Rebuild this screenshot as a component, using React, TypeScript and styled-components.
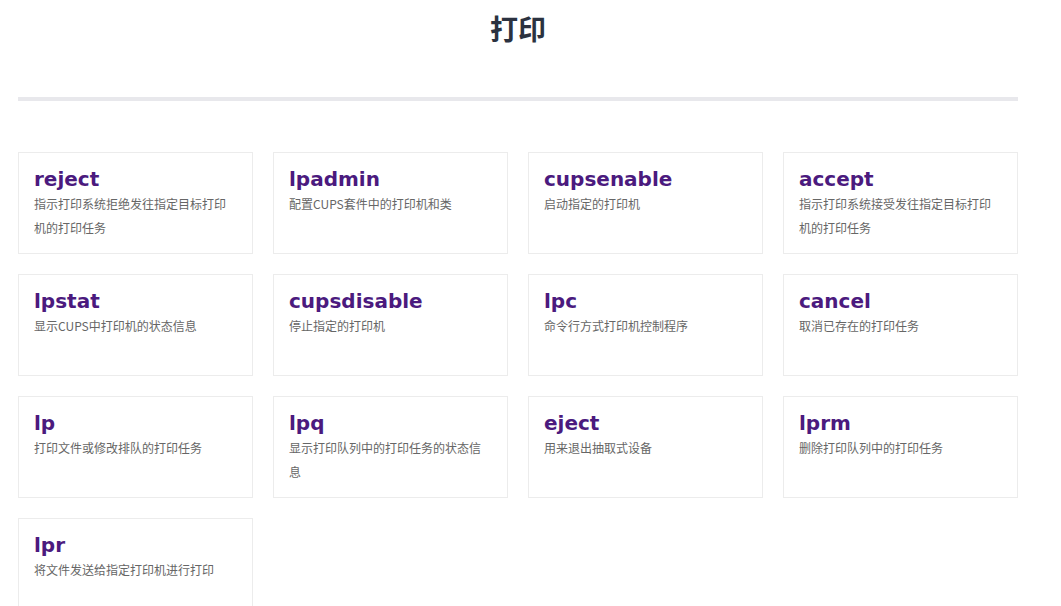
import React from "react";
import styled, { createGlobalStyle } from "styled-components";

const GlobalStyle = createGlobalStyle`
  html, body {
    margin: 0;
    padding: 0;
    background: #fff;
  }
  body {
    font-family: "Noto Sans CJK SC", "Noto Sans", sans-serif;
  }
`;

const Page = styled.main`
  width: 1000px;
  padding: 0 18px;
`;

const Heading = styled.h1`
  margin: 0;
  padding-top: 8px;
  height: 40px;
  line-height: 40px;
  text-align: center;
  font-size: 28px;
  font-weight: 700;
  color: #2b3240;
`;

const Divider = styled.hr`
  margin: 49px 0 0;
  border: none;
  height: 4px;
  background: #e8e8ec;
`;

const Grid = styled.section`
  margin-top: 51px;
  display: grid;
  grid-template-columns: repeat(4, 1fr);
  gap: 20px;
`;

const Card = styled.div`
  box-sizing: border-box;
  height: 102px;
  padding: 14px 15px;
  border: 1px solid #ececec;
  background: #fff;
`;

const Name = styled.div`
  font-family: "DejaVu Sans", Verdana, sans-serif;
  font-weight: 700;
  font-size: 20px;
  line-height: 24px;
  color: #4b1a7e;
`;

const Desc = styled.div`
  margin-top: 1px;
  font-size: 12px;
  line-height: 24px;
  color: #666;
`;

const commands = [
  { name: "reject", desc: "指示打印系统拒绝发往指定目标打印机的打印任务" },
  { name: "lpadmin", desc: "配置CUPS套件中的打印机和类" },
  { name: "cupsenable", desc: "启动指定的打印机" },
  { name: "accept", desc: "指示打印系统接受发往指定目标打印机的打印任务" },
  { name: "lpstat", desc: "显示CUPS中打印机的状态信息" },
  { name: "cupsdisable", desc: "停止指定的打印机" },
  { name: "lpc", desc: "命令行方式打印机控制程序" },
  { name: "cancel", desc: "取消已存在的打印任务" },
  { name: "lp", desc: "打印文件或修改排队的打印任务" },
  { name: "lpq", desc: "显示打印队列中的打印任务的状态信息" },
  { name: "eject", desc: "用来退出抽取式设备" },
  { name: "lprm", desc: "删除打印队列中的打印任务" },
  { name: "lpr", desc: "将文件发送给指定打印机进行打印" },
];

export default function App() {
  return (
    <>
      <GlobalStyle />
      <Page>
        <Heading>打印</Heading>
        <Divider />
        <Grid>
          {commands.map((c) => (
            <Card key={c.name}>
              <Name>{c.name}</Name>
              <Desc>{c.desc}</Desc>
            </Card>
          ))}
        </Grid>
      </Page>
    </>
  );
}
